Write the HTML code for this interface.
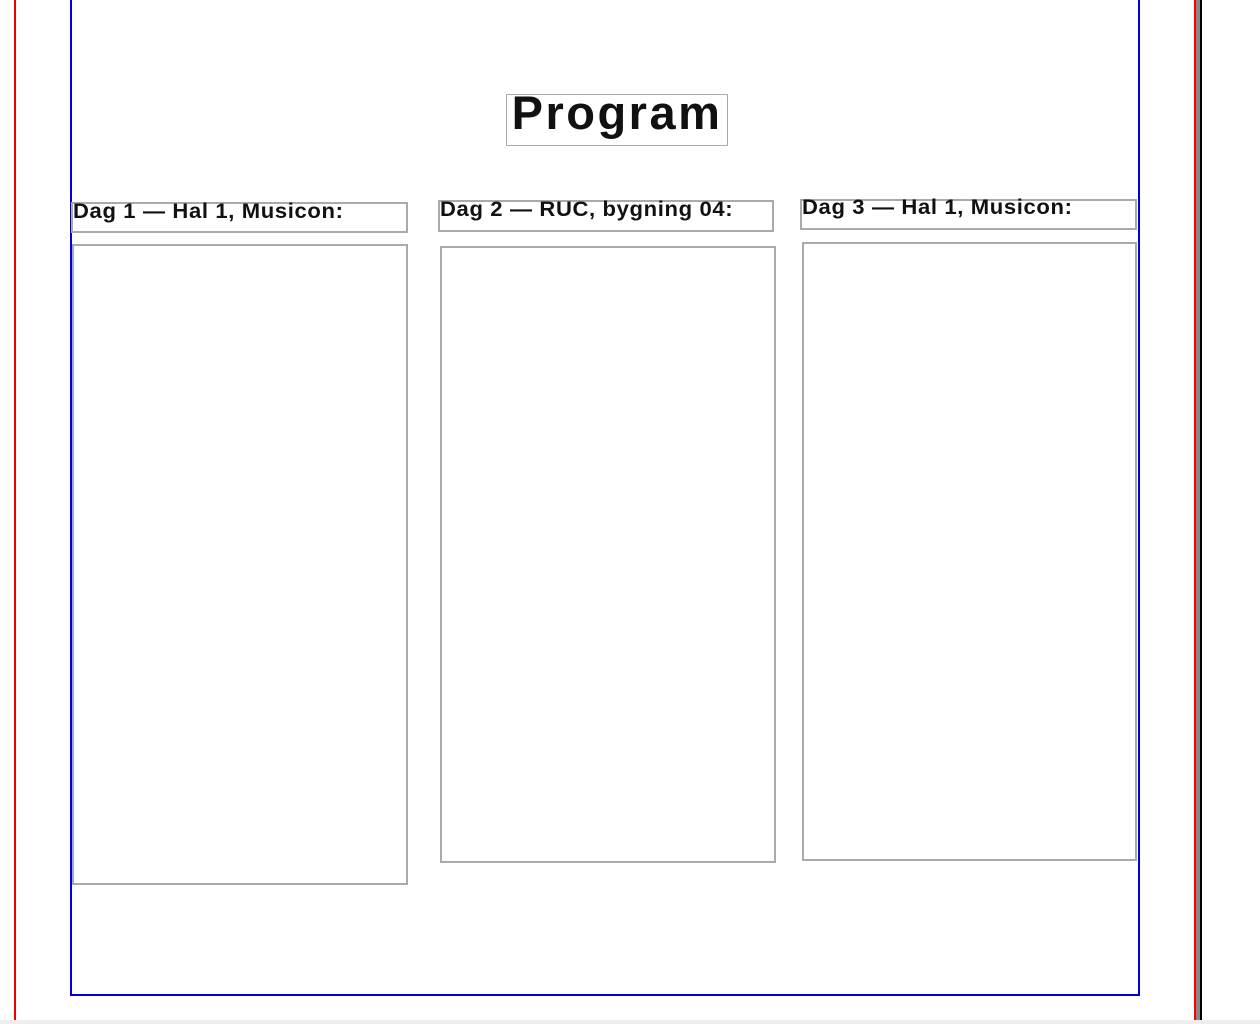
<!DOCTYPE html>
<html><head><style>
body{margin:0;width:1260px;height:1024px;position:relative;background:#fff;overflow:hidden;font-family:"Liberation Sans",sans-serif;}
div{position:absolute;box-sizing:border-box;}
.b{border:2px solid #aaa;}
.h{font-weight:bold;font-size:21px;color:#111;line-height:22px;white-space:nowrap;letter-spacing:0.6px;transform:scaleX(1.05);transform-origin:left;}
</style></head><body>
<div style="left:14px;top:0;width:2px;height:1020px;background:#e00"></div>
<div style="left:70px;top:-4px;width:1070px;height:1000px;border:2px solid #00d"></div>
<div style="left:1194px;top:0;width:2px;height:1020px;background:#f00"></div>
<div style="left:1196px;top:0;width:4px;height:1020px;background:#888"></div>
<div style="left:1200px;top:0;width:2px;height:1020px;background:#000"></div>
<div style="left:0;top:1020px;width:1260px;height:4px;background:#eee"></div>
<div class="b" style="left:506px;top:94px;width:222px;height:52px;border-width:1px;"></div>
<div style="left:490px;top:87px;width:254px;text-align:center;font-weight:bold;font-size:47px;color:#111;line-height:52px;letter-spacing:2.5px;">Program</div>
<div class="b" style="left:71px;top:202px;width:337px;height:31px;"></div>
<div class="h" style="left:73px;top:201px;">Dag 1 — Hal 1, Musicon:</div>
<div class="b" style="left:438px;top:200px;width:336px;height:32px;"></div>
<div class="h" style="left:440px;top:199px;">Dag 2 — RUC, bygning 04:</div>
<div class="b" style="left:800px;top:199px;width:337px;height:31px;"></div>
<div class="h" style="left:802px;top:197px;">Dag 3 — Hal 1, Musicon:</div>
<div class="b" style="left:72px;top:244px;width:336px;height:641px;"></div>
<div class="b" style="left:440px;top:246px;width:336px;height:617px;"></div>
<div class="b" style="left:802px;top:242px;width:335px;height:619px;"></div>
</body></html>
